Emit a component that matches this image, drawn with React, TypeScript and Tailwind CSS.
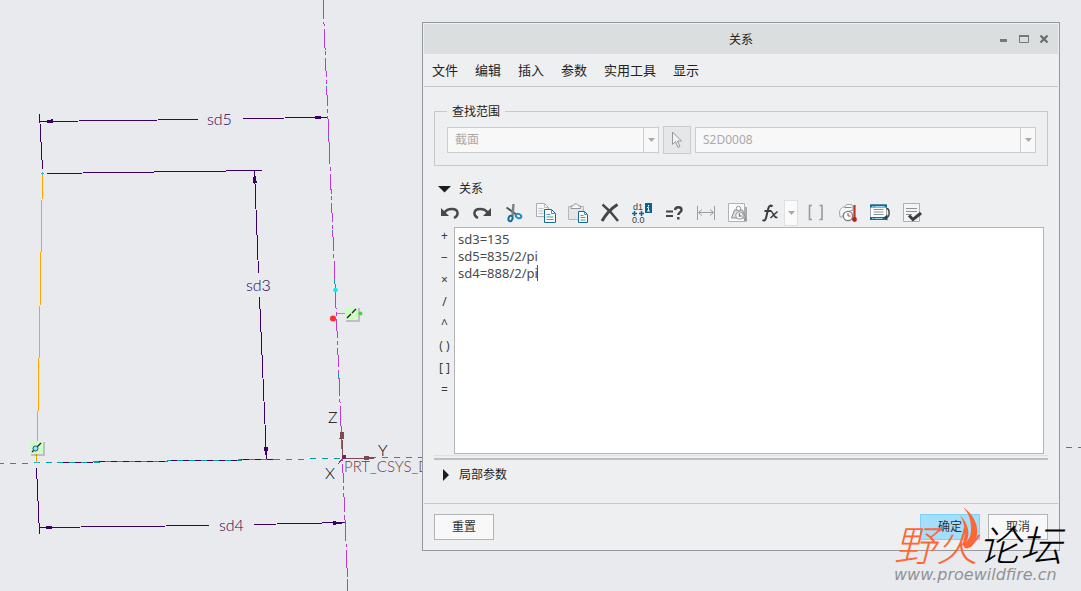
import React, { useState } from "react";

const menus = ["文件", "编辑", "插入", "参数", "实用工具", "显示"];
const operators = ["+", "−", "×", "/", "^", "( )", "[ ]", "="];

function Sketch() {
  return (
    <svg className="absolute inset-0 h-full w-full" shapeRendering="crispEdges" fill="none">
      {/* reference axes */}
      <line x1="0" y1="463.5" x2="1081" y2="447.5" stroke="#00a2a0" strokeDasharray="6 6" strokeDashoffset="2" />
      <line x1="323" y1="0" x2="348" y2="591" stroke="#00a2a0" strokeDasharray="12 36" strokeDashoffset="10" />
      <line x1="323" y1="0" x2="348" y2="591" stroke="#b93bd8" strokeDasharray="19 3 4 3" />

      {/* orange section line */}
      <polyline points="42.5,174 37.5,438 36.5,462" stroke="#ffa500" />
      <path d="M41 173.5h3M42.5 172v3M35 462.5h4" stroke="#37b6d6" />

      {/* sd5 */}
      <g stroke="#3b0066">
        <line x1="39.5" y1="114" x2="42.5" y2="169" />
        <line x1="40" y1="121.5" x2="198" y2="119.5" />
        <line x1="243" y1="118.5" x2="327" y2="117.5" />
      </g>
      <path d="M41 122l12-3v4zM327 117.500l-12-2v4z" fill="#3b0066" />

      {/* sd3 */}
      <g stroke="#3b0066">
        <line x1="47" y1="173.5" x2="262" y2="170.500" />
        <line x1="254.5" y1="171" x2="258.5" y2="273" />
        <line x1="259.5" y1="297" x2="266.5" y2="459" />
        <line x1="57" y1="462.500" x2="279" y2="459.500" />
        <line x1="57" y1="462.500" x2="279" y2="459.500" stroke="#00a2a0" strokeDasharray="6 6" />
      </g>
      <path d="M254.500 171l-2 12h4.500zM266.500 459l-3-12h4.500z" fill="#3b0066" />

      {/* sd4 */}
      <g stroke="#3b0066">
        <line x1="36.5" y1="468" x2="39.5" y2="534" />
        <line x1="39" y1="527.5" x2="209" y2="525.5" />
        <line x1="254" y1="524.5" x2="345" y2="522.5" />
      </g>
      <path d="M40 527.500l12-2v4zM345 523l-12-2v4z" fill="#3b0066" />

      {/* csys */}
      <g stroke="#7c4a50">
        <path d="M342.500 458v-18M343 458.500h31M343 458l-5 6" />
        <path d="M340 438l1-6h2v6zM364 456v4l10-2z" fill="#7c4a50" />
      </g>
      <circle cx="344" cy="457" r="2" fill="#7c2050" />

      {/* constraint markers */}
      <path d="M337 313.500h9" stroke="#2ee62e" />
      <g shapeRendering="auto">
        <rect x="346" y="308" width="14" height="14" fill="#000" opacity=".18" />
        <rect x="345" y="307" width="13" height="13" fill="#cffcc4" />
        <path d="M347 318l4-4M352 313l4-4" stroke="#222" strokeWidth="1.4" />
        <circle cx="360.500" cy="313.500" r="2" fill="#2ee62e" />
        <circle cx="333" cy="318.500" r="3" fill="#ff2d2d" />
        <circle cx="335.500" cy="290" r="2.300" fill="#12e8f5" />
        <rect x="31" y="442" width="14" height="14" fill="#000" opacity=".18" />
        <rect x="30" y="441" width="13" height="13" fill="#cffcc4" />
        <path d="M32 452l9-9" stroke="#222" strokeWidth="1.300" />
        <circle cx="35.500" cy="448.500" r="2.500" fill="#9be0ee" stroke="#17618a" />
      </g>

      <g fontFamily="Lato, sans-serif" fontSize="16" fontWeight="300" fill="#2a0055">
        <text x="207" y="125">sd5</text>
        <text x="246" y="291">sd3</text>
        <text x="219" y="531">sd4</text>
        <g fill="#000">
          <text x="328" y="423">Z</text>
          <text x="378" y="456">Y</text>
          <text x="325" y="479">X</text>
        </g>
        <text x="344" y="472" fontSize="15" fill="#6c3a40">PRT_CSYS_DEF</text>
      </g>
    </svg>
  );
}

function Caret() {
  return (
    <svg width="7" height="4" viewBox="0 0 7 4">
      <path d="M0 0h7L3.500 4z" fill="#a9a9ab" />
    </svg>
  );
}

function Combo({ label, value, className }: { label: string; value: string; className: string }) {
  return (
    <div className={`relative h-[26px] border border-[#cbccce] bg-[#f8f8f8] ${className}`}>
      <select
        aria-label={label}
        disabled
        defaultValue={value}
        className="h-full w-full appearance-none bg-transparent pr-5 pl-[7px] text-xs text-[#a8a9ab]"
      >
        <option>{value}</option>
      </select>
      <span className="pointer-events-none absolute inset-y-0 right-0 flex w-[15px] items-center justify-center border-l border-[#cbccce]">
        <Caret />
      </span>
    </div>
  );
}

function Icon({ children }: { children: React.ReactNode }) {
  return (
    <svg width="20" height="20" viewBox="0 0 20 20" fill="none" className="shrink-0 overflow-visible">
      {children}
    </svg>
  );
}

function Tool({ label, wide = true, children }: { label: string; wide?: boolean; children: React.ReactNode }) {
  return (
    <button
      type="button"
      aria-label={label}
      title={label}
      className={`flex h-full shrink-0 items-center justify-center ${wide ? "w-8" : "w-[30px]"}`}
    >
      <Icon>{children}</Icon>
    </button>
  );
}

function Toolbar() {
  return (
    <div className="mt-[3px] mb-px flex h-[26px]">
      <Tool label="撤消">
        <path d="M1 5v8h8z" fill="#48494b" />
        <path d="M4 10C8 4.500 17 5 17.600 10c.1 2-1 3.800-3.600 5" stroke="#48494b" strokeWidth="2.400" />
      </Tool>
      <Tool label="重做">
        <path d="M19 5v8h-8z" fill="#48494b" />
        <path d="M16 10C12 4.500 3 5 2.400 10c-.1 2 1 3.800 3.600 5" stroke="#48494b" strokeWidth="2.400" />
      </Tool>
      <Tool label="剪切">
        <path d="M2.500 4.500L13 12" stroke="#55585b" strokeWidth="2" />
        <path d="M9.500 1L8.500 13" stroke="#7c8083" strokeWidth="2.400" />
        <ellipse cx="6.500" cy="15.500" rx="2" ry="2.700" stroke="#1a6e96" strokeWidth="2" transform="rotate(20 6.500 15.500)" />
        <ellipse cx="14.500" cy="13" rx="2.900" ry="2" stroke="#2d8cb5" strokeWidth="2" transform="rotate(25 14.500 13)" />
      </Tool>
      <Tool label="复制">
        <path d="M.5.500h8l4 4v9h-12z" fill="#f6f6f7" stroke="#a9adb1" />
        <path d="M8.500.500v4h4M2.500 5.500h5M2.500 8h5M2.500 10.500h5" stroke="#bcbfc2" />
        <path d="M8.500 6.500h7l4 4v9h-11z" fill="#fff" stroke="#17688f" />
        <path d="M15.500 6.500v4h4M10.500 11.500h4M10.500 14h7M10.500 16.500h7" stroke="#4797bb" />
      </Tool>
      <Tool label="粘贴">
        <path d="M.5 3.500h15v13H.5z" fill="#e3e5e7" stroke="#b5b7ba" />
        <path d="M3 5.500V3h2c.5-3 5-3 5.500 0h2v2.500z" fill="#f7f7f7" stroke="#93979a" />
        <path d="M10.500 8.500h6l3 3v8h-9z" fill="#fff" stroke="#17688f" />
        <path d="M16.500 8.500v3h3M12.500 12.500h3M12.500 14.500h5M12.500 17h5" stroke="#4797bb" />
      </Tool>
      <Tool label="删除">
        <path d="M2.500 1.500C8 6 13 11 18 18" stroke="#454648" strokeWidth="2.400" />
        <path d="M17.500 1.500C12 5 6 11 2 18" stroke="#454648" strokeWidth="3" />
      </Tool>
      <Tool label="切换尺寸">
        <text x="1" y="7" fontSize="9" fill="#3f4042" fontFamily="Liberation Sans, sans-serif">d1</text>
        <path d="M0 10.500h5M2.500 8v5M7 10.500h5M9.500 8v5" stroke="#0f628b" strokeWidth="1.500" />
        <text x="0" y="20" fontSize="9" fill="#3f4042" fontFamily="Liberation Sans, sans-serif">0.0</text>
        <path d="M13 0h7v10h-7z" fill="#0f628b" />
        <path d="M16.500 2v1.500M15 4.500h1.500v3.500M15 8h3" stroke="#fff" />
      </Tool>
      <Tool label="计算值">
        <path d="M2 8.500h7M2 13h7" stroke="#434446" strokeWidth="2" />
        <path d="M11 7c.5-4 6.500-3.500 6.500 0 0 2.300-3.200 2.500-3.200 5M14.300 14v2.500" stroke="#434446" strokeWidth="2.400" />
      </Tool>
      <Tool label="显示尺寸">
        <path d="M1.500 3v14M18.500 3v14M3 9.500h14M6 6.500l-3.500 3L6 12.500M14 6.500l3.500 3-3.500 3" stroke="#9b9c9f" />
      </Tool>
      <Tool label="单位">
        <path d="M.5.500h16v18H.5z" fill="#fbfbfc" stroke="#b0b3b6" />
        <path d="M3.500 15l3-8h8l3 8z" fill="#dcdddf" stroke="#8d8f92" />
        <circle cx="10.500" cy="5.500" r="2.200" fill="#fff" stroke="#8d8f92" />
        <circle cx="11.500" cy="12.500" r="3.800" fill="#f4f4f4" stroke="#98999b" />
        <path d="M11.500 10v3h2M18 4v12" stroke="#85878a" strokeWidth="1.300" />
        <circle cx="17.500" cy="17" r="1.700" fill="#999" />
      </Tool>
      <Tool label="函数" wide={false}>
        <path d="M13.500 3.500c-2-1.800-3.600-.6-4.200 2L7 15c-.6 2.500-2 3-3.500 2M5.500 8h7" stroke="#3c3d3f" strokeWidth="2" />
        <path d="M12 8.500c2-.6 2.500 7 6.500 6M18.500 8.500L11.500 15" stroke="#3c3d3f" strokeWidth="1.600" />
      </Tool>
      <button
        type="button"
        aria-label="函数列表"
        className="mr-[2px] flex w-[14px] items-center justify-center border border-[#e0e0e2] bg-[#fafafa]"
      >
        <Caret />
      </button>
      <Tool label="括号">
        <path d="M6 2.500H3.500v14H6M13.500 2.500H16v14h-2.500" stroke="#98999b" strokeWidth="1.600" />
      </Tool>
      <Tool label="单位换算">
        <path d="M1.500 9c1-4 3-5 5-5l2-2.500h5L15 4v3l-9 3-2 4H2z" fill="#f6f6f6" stroke="#a2a4a7" />
        <path d="M6.500 4.500h7" stroke="#85878a" />
        <circle cx="10" cy="13" r="4.600" fill="#fff" stroke="#77797c" strokeWidth="1.200" />
        <path d="M10 10v3h2.500" stroke="#b3442c" />
        <path d="M16.500 2v14" stroke="#c0332b" strokeWidth="2.200" />
        <circle cx="16.500" cy="16.500" r="2.400" fill="#b3241e" />
      </Tool>
      <Tool label="排序关系">
        <path d="M.5 1.500h16v15H.5z" fill="#fff" stroke="#9fa5aa" />
        <path d="M0 3h17M0 15.500h17" stroke="#0f6f9b" strokeWidth="3" />
        <path d="M2 3.500h1.500M4.500 3.500h10M2 15.500h1.500M4.500 15.500h8" stroke="#9ed4ea" />
        <path d="M3.500 6.500h10M3.500 9h10M3.500 11.500h10" stroke="#8b9195" />
        <path d="M16.500 5.500c3.500 0 3.500 9 0 9" stroke="#3c3d3f" strokeWidth="1.400" />
        <path d="M13.500 14.500l4-3v6z" fill="#3c3d3f" />
      </Tool>
      <Tool label="校验">
        <path d="M1.500.500h16v18h-16z" fill="#f1f5f7" stroke="#a5b2ba" />
        <path d="M4 5.500h11M4 8.500h11M4 11.500h6" stroke="#8b9195" />
        <path d="M7 12.500l4 4 8-6.500" stroke="#3c3d3f" strokeWidth="3" />
      </Tool>
    </div>
  );
}

function Watermark() {
  return (
    <div className="pointer-events-none absolute top-[519px] right-[19px] italic">
      <div
        className="flex h-12 items-center text-[42px] leading-none font-light whitespace-nowrap"
        style={{ fontFamily: '"Noto Sans CJK SC", sans-serif' }}
      >
        <span className="text-[#ff6633]">野火</span>
        <span className="text-black">论坛</span>
      </div>
      <div
        className="text-base leading-4 text-[#919295]"
        style={{ fontFamily: '"DejaVu Sans", sans-serif' }}
      >
        www.proewildfire.cn
      </div>
      <svg className="absolute -top-3 left-[66px]" width="24" height="44" viewBox="0 0 24 44">
        <path d="M3 0c14 10 19 26 9 38-2 3-5 4-7 3l-3-4c6-3 9-6 9-15C11 13 9 7 3 0z" fill="#ff6633" />
        <path d="M0 8c8 8 11 19 6 27l-4 3c4-9 4-19-2-30z" fill="#ff6633" />
      </svg>
    </div>
  );
}

export default function App() {
  const [text, setText] = useState("sd3=135\nsd5=835/2/pi\nsd4=888/2/pi");
  const [showRelations, setShowRelations] = useState(true);
  const [showParams, setShowParams] = useState(false);

  return (
    <div
      className="relative min-h-screen overflow-hidden bg-[#e8eaee]"
      style={{ fontFamily: '"Noto Sans", "Noto Sans CJK SC", sans-serif' }}
    >
      <Sketch />

      <div className="absolute top-[22px] right-[21px] left-[422px] border border-[#97989b] bg-[#eeeff1] pt-px text-xs text-[#222]">
        <div className="mx-px grid h-[30px] grid-cols-[1fr_auto_1fr] items-center bg-[#dadedf]">
          <span />
          <h1 className="pt-[2px]">关系</h1>
          <div className="flex items-center justify-end gap-[10px] pr-[9px]">
            <button type="button" aria-label="最小化">
              <svg width="10" height="10"><path d="M1 5h7v3H1z" fill="#76787c" /></svg>
            </button>
            <button type="button" aria-label="最大化">
              <svg width="10" height="10">
                <path d="M.5 1.500h9v7h-9z" fill="none" stroke="#76787c" />
                <path d="M0 1h10v2H0z" fill="#76787c" />
              </svg>
            </button>
            <button type="button" aria-label="关闭">
              <svg width="10" height="10">
                <path d="M1.500 1.500l7 7M8.500 1.500l-7 7" stroke="#6a6c70" strokeWidth="2.200" />
              </svg>
            </button>
          </div>
        </div>

        <nav className="mx-px flex h-[33px] items-center gap-[17px] border-b border-[#c6c8ca] px-2 pt-[2px] text-[13px]">
          {menus.map((m) => (
            <button key={m} type="button">{m}</button>
          ))}
        </nav>

        <div className="px-[11px]">
          <fieldset className="mt-4 border border-[#c6c8ca] pr-[11px] pb-[11px] pl-3">
            <legend className="px-[5px] pt-px leading-4">查找范围</legend>
            <div className="flex items-center gap-1 pt-[6px]">
              <Combo label="对象类型" value="截面" className="w-[212px] shrink-0" />
              <button
                type="button"
                aria-label="选择"
                disabled
                className="flex h-7 w-7 shrink-0 items-center justify-center border border-[#cbccce] bg-[#e6e7e9]"
              >
                <svg width="12" height="18" viewBox="0 0 12 18">
                  <path d="M1.500 1v12.500l3-3 2.500 6 2-1-2.500-5.500h4z" fill="#f2f2f2" stroke="#97989a" />
                </svg>
              </button>
              <Combo label="对象名称" value="S2D0008" className="flex-1" />
            </div>
          </fieldset>

          <button
            type="button"
            onClick={() => setShowRelations(!showRelations)}
            className="mt-[15px] flex h-4 items-center gap-2 pl-1 leading-4"
          >
            <svg width="13" height="12" viewBox="0 0 13 12" className={showRelations ? "" : "-rotate-90"}>
              <path d="M0 3h13L6.500 9.500z" fill="#1c1c1c" />
            </svg>
            关系
          </button>

          {showRelations && (
            <>
              <Toolbar />
              <div className="mr-1 flex">
                <div className="flex w-5 shrink-0 flex-col pl-px">
                  {operators.map((op) => (
                    <button
                      key={op}
                      type="button"
                      onClick={() => setText(text + op.replace(" ", ""))}
                      className="h-[22px] pb-1 text-xs leading-none whitespace-nowrap text-[#3a3b3d]"
                    >
                      {op}
                    </button>
                  ))}
                </div>
                <div className="relative flex-1">
                  <textarea
                    aria-label="关系"
                    value={text}
                    onChange={(e) => setText(e.target.value)}
                    className="block h-[227px] w-full resize-none border border-[#b3b4b7] bg-white px-[3px] py-[3px] text-[13px] leading-[17px] text-[#4a4a4c] caret-[#0a64b4] outline-none"
                  />
                  <span className="absolute top-[38px] left-[83px] h-4 w-px bg-[#0a64b4]" />
                </div>
              </div>
            </>
          )}

          <div className="mt-px h-[5px] border-t border-b-2 border-t-[#d9e2e6] border-b-[#bcbec0]" />
          <button
            type="button"
            onClick={() => setShowParams(!showParams)}
            className="mt-[7px] flex h-4 items-center gap-2 pl-1 leading-4"
          >
            <svg width="13" height="12" viewBox="0 0 13 12" className={showParams ? "rotate-90" : ""}>
              <path d="M5 0v12l6-6z" fill="#1c1c1c" />
            </svg>
            局部参数
          </button>
        </div>

        <div className="mx-px mt-5 flex border-t border-[#c6c8ca] px-[10px] py-[10px] leading-4">
          <button type="button" className="h-[26px] w-[60px] border border-[#b3b4b7] bg-[#f8f8f8] text-[#333]">
            重置
          </button>
          <button type="button" className="ml-auto h-[26px] w-[60px] border border-[#7fd0f5] bg-[#a3defd] text-[#333]">
            确定
          </button>
          <button type="button" className="ml-2 h-[26px] w-[60px] border border-[#b3b4b7] bg-[#f8f8f8] text-[#333]">
            取消
          </button>
        </div>
      </div>

      <Watermark />
    </div>
  );
}
